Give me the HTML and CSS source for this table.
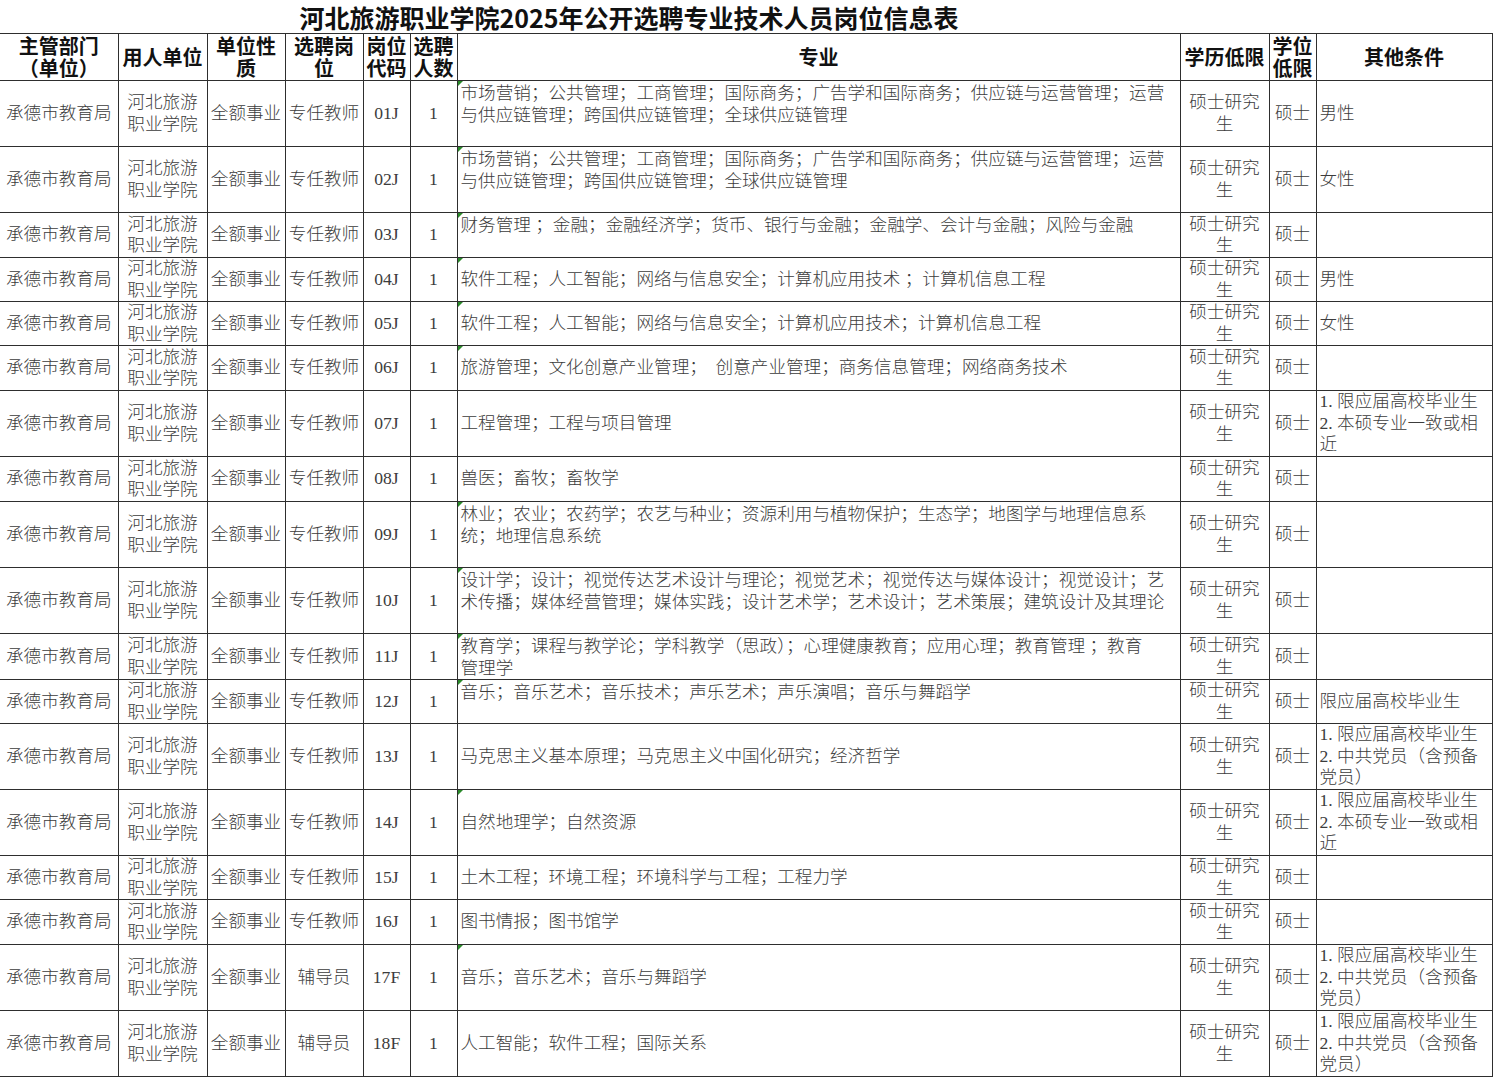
FILE: index.html
```html
<!DOCTYPE html>
<html lang="zh-CN">
<head>
<meta charset="utf-8">
<title>河北旅游职业学院2025年公开选聘专业技术人员岗位信息表</title>
<link rel="stylesheet" href="styles.css">
</head>
<body>
<div class="sheet">
  <div class="title"><span class="title-text">河北旅游职业学院2025年公开选聘专业技术人员岗位信息表</span></div>
  <table class="grid">
    <colgroup>
      <col class="c1"><col class="c2"><col class="c3"><col class="c4"><col class="c5">
      <col class="c6"><col class="c7"><col class="c8"><col class="c9"><col class="c10">
    </colgroup>
    <thead>
      <tr class="head">
        <th>主管部门（单位）</th><th>用人单位</th><th>单位性质</th><th>选聘岗位</th><th>岗位代码</th>
        <th>选聘人数</th><th>专业</th><th>学历低限</th><th>学位低限</th><th>其他条件</th>
      </tr>
    </thead>
    <tbody>
      <tr class="tall">
        <td class="ctr">承德市教育局</td><td class="ctr">河北旅游职业学院</td><td class="ctr">全额事业</td><td class="ctr">专任教师</td><td class="ctr">01J</td><td class="ctr">1</td>
        <td class="major top tri">市场营销；公共管理；工商管理；国际商务；广告学和国际商务；供应链与运营管理；运营<br>与供应链管理；跨国供应链管理；全球供应链管理</td>
        <td class="ctr">硕士研究生</td><td class="ctr">硕士</td><td class="other">男性</td>
      </tr>
      <tr class="tall">
        <td class="ctr">承德市教育局</td><td class="ctr">河北旅游职业学院</td><td class="ctr">全额事业</td><td class="ctr">专任教师</td><td class="ctr">02J</td><td class="ctr">1</td>
        <td class="major top tri">市场营销；公共管理；工商管理；国际商务；广告学和国际商务；供应链与运营管理；运营<br>与供应链管理；跨国供应链管理；全球供应链管理</td>
        <td class="ctr">硕士研究生</td><td class="ctr">硕士</td><td class="other">女性</td>
      </tr>
      <tr class="short plus">
        <td class="ctr">承德市教育局</td><td class="ctr">河北旅游职业学院</td><td class="ctr">全额事业</td><td class="ctr">专任教师</td><td class="ctr">03J</td><td class="ctr">1</td>
        <td class="major top tri">财务管理 ；金融；金融经济学；货币、银行与金融；金融学、会计与金融；风险与金融</td>
        <td class="ctr">硕士研究生</td><td class="ctr">硕士</td><td class="other"></td>
      </tr>
      <tr class="short">
        <td class="ctr">承德市教育局</td><td class="ctr">河北旅游职业学院</td><td class="ctr">全额事业</td><td class="ctr">专任教师</td><td class="ctr">04J</td><td class="ctr">1</td>
        <td class="major tri">软件工程；人工智能；网络与信息安全；计算机应用技术 ；计算机信息工程</td>
        <td class="ctr">硕士研究生</td><td class="ctr">硕士</td><td class="other">男性</td>
      </tr>
      <tr class="short">
        <td class="ctr">承德市教育局</td><td class="ctr">河北旅游职业学院</td><td class="ctr">全额事业</td><td class="ctr">专任教师</td><td class="ctr">05J</td><td class="ctr">1</td>
        <td class="major tri">软件工程；人工智能；网络与信息安全；计算机应用技术；计算机信息工程</td>
        <td class="ctr">硕士研究生</td><td class="ctr">硕士</td><td class="other">女性</td>
      </tr>
      <tr class="short plus">
        <td class="ctr">承德市教育局</td><td class="ctr">河北旅游职业学院</td><td class="ctr">全额事业</td><td class="ctr">专任教师</td><td class="ctr">06J</td><td class="ctr">1</td>
        <td class="major tri">旅游管理；文化创意产业管理；　创意产业管理；商务信息管理；网络商务技术</td>
        <td class="ctr">硕士研究生</td><td class="ctr">硕士</td><td class="other"></td>
      </tr>
      <tr class="tall">
        <td class="ctr">承德市教育局</td><td class="ctr">河北旅游职业学院</td><td class="ctr">全额事业</td><td class="ctr">专任教师</td><td class="ctr">07J</td><td class="ctr">1</td>
        <td class="major">工程管理；工程与项目管理</td>
        <td class="ctr">硕士研究生</td><td class="ctr">硕士</td><td class="other">1. 限应届高校毕业生<br>2. 本硕专业一致或相近</td>
      </tr>
      <tr class="short plus">
        <td class="ctr">承德市教育局</td><td class="ctr">河北旅游职业学院</td><td class="ctr">全额事业</td><td class="ctr">专任教师</td><td class="ctr">08J</td><td class="ctr">1</td>
        <td class="major">兽医；畜牧；畜牧学</td>
        <td class="ctr">硕士研究生</td><td class="ctr">硕士</td><td class="other"></td>
      </tr>
      <tr class="tall">
        <td class="ctr">承德市教育局</td><td class="ctr">河北旅游职业学院</td><td class="ctr">全额事业</td><td class="ctr">专任教师</td><td class="ctr">09J</td><td class="ctr">1</td>
        <td class="major top tri">林业；农业；农药学；农艺与种业；资源利用与植物保护；生态学；地图学与地理信息系<br>统；地理信息系统</td>
        <td class="ctr">硕士研究生</td><td class="ctr">硕士</td><td class="other"></td>
      </tr>
      <tr class="tall">
        <td class="ctr">承德市教育局</td><td class="ctr">河北旅游职业学院</td><td class="ctr">全额事业</td><td class="ctr">专任教师</td><td class="ctr">10J</td><td class="ctr">1</td>
        <td class="major top tri">设计学；设计；视觉传达艺术设计与理论；视觉艺术；视觉传达与媒体设计；视觉设计；艺<br>术传播；媒体经营管理；媒体实践；设计艺术学；艺术设计；艺术策展；建筑设计及其理论</td>
        <td class="ctr">硕士研究生</td><td class="ctr">硕士</td><td class="other"></td>
      </tr>
      <tr class="short plus">
        <td class="ctr">承德市教育局</td><td class="ctr">河北旅游职业学院</td><td class="ctr">全额事业</td><td class="ctr">专任教师</td><td class="ctr">11J</td><td class="ctr">1</td>
        <td class="major top tri">教育学；课程与教学论；学科教学（思政）；心理健康教育；应用心理；教育管理 ；教育<br>管理学</td>
        <td class="ctr">硕士研究生</td><td class="ctr">硕士</td><td class="other"></td>
      </tr>
      <tr class="short">
        <td class="ctr">承德市教育局</td><td class="ctr">河北旅游职业学院</td><td class="ctr">全额事业</td><td class="ctr">专任教师</td><td class="ctr">12J</td><td class="ctr">1</td>
        <td class="major top tri">音乐；音乐艺术；音乐技术；声乐艺术；声乐演唱；音乐与舞蹈学</td>
        <td class="ctr">硕士研究生</td><td class="ctr">硕士</td><td class="other">限应届高校毕业生</td>
      </tr>
      <tr class="tall">
        <td class="ctr">承德市教育局</td><td class="ctr">河北旅游职业学院</td><td class="ctr">全额事业</td><td class="ctr">专任教师</td><td class="ctr">13J</td><td class="ctr">1</td>
        <td class="major">马克思主义基本原理；马克思主义中国化研究；经济哲学</td>
        <td class="ctr">硕士研究生</td><td class="ctr">硕士</td><td class="other">1. 限应届高校毕业生<br>2. 中共党员（含预备党员）</td>
      </tr>
      <tr class="tall">
        <td class="ctr">承德市教育局</td><td class="ctr">河北旅游职业学院</td><td class="ctr">全额事业</td><td class="ctr">专任教师</td><td class="ctr">14J</td><td class="ctr">1</td>
        <td class="major tri">自然地理学；自然资源</td>
        <td class="ctr">硕士研究生</td><td class="ctr">硕士</td><td class="other">1. 限应届高校毕业生<br>2. 本硕专业一致或相近</td>
      </tr>
      <tr class="short">
        <td class="ctr">承德市教育局</td><td class="ctr">河北旅游职业学院</td><td class="ctr">全额事业</td><td class="ctr">专任教师</td><td class="ctr">15J</td><td class="ctr">1</td>
        <td class="major">土木工程；环境工程；环境科学与工程；工程力学</td>
        <td class="ctr">硕士研究生</td><td class="ctr">硕士</td><td class="other"></td>
      </tr>
      <tr class="short plus">
        <td class="ctr">承德市教育局</td><td class="ctr">河北旅游职业学院</td><td class="ctr">全额事业</td><td class="ctr">专任教师</td><td class="ctr">16J</td><td class="ctr">1</td>
        <td class="major">图书情报；图书馆学</td>
        <td class="ctr">硕士研究生</td><td class="ctr">硕士</td><td class="other"></td>
      </tr>
      <tr class="tall">
        <td class="ctr">承德市教育局</td><td class="ctr">河北旅游职业学院</td><td class="ctr">全额事业</td><td class="ctr">辅导员</td><td class="ctr">17F</td><td class="ctr">1</td>
        <td class="major tri">音乐；音乐艺术；音乐与舞蹈学</td>
        <td class="ctr">硕士研究生</td><td class="ctr">硕士</td><td class="other">1. 限应届高校毕业生<br>2. 中共党员（含预备党员）</td>
      </tr>
      <tr class="tall">
        <td class="ctr">承德市教育局</td><td class="ctr">河北旅游职业学院</td><td class="ctr">全额事业</td><td class="ctr">辅导员</td><td class="ctr">18F</td><td class="ctr">1</td>
        <td class="major">人工智能；软件工程；国际关系</td>
        <td class="ctr">硕士研究生</td><td class="ctr">硕士</td><td class="other">1. 限应届高校毕业生<br>2. 中共党员（含预备党员）</td>
      </tr>
    </tbody>
  </table>
</div>
</body>
</html>
```
FILE: styles.css
```css
html, body {
  margin: 0;
  padding: 0;
  background: #ffffff;
}

.sheet {
  width: 1496px;
}

.title {
  width: 1258px;
  height: 33px;
  display: flex;
  align-items: center;
  justify-content: center;
}

.title-text {
  font-family: "Noto Sans CJK SC", sans-serif;
  font-weight: 700;
  font-size: 25px;
  line-height: 1.2;
  color: #111;
}

.grid {
  border-collapse: collapse;
  table-layout: fixed;
  width: 1492px;
}

.c1 { width: 118px; }
.c2 { width: 89px; }
.c3 { width: 78px; }
.c4 { width: 78px; }
.c5 { width: 47px; }
.c6 { width: 47px; }
.c7 { width: 723px; }
.c8 { width: 89px; }
.c9 { width: 47px; }
.c10 { width: 176px; }

.grid th,
.grid td {
  border: 1px solid #2e2e2e;
  padding: 0 3px;
}

.grid tr > :first-child {
  border-left: none;
}

.head {
  height: 47px;
}

.grid th {
  font-family: "Noto Sans CJK SC", sans-serif;
  font-weight: 700;
  font-size: 20px;
  line-height: 22.5px;
  color: #111;
  text-align: center;
  vertical-align: middle;
  padding: 0 2px;
}

.grid td {
  font-family: "Liberation Serif", "Noto Sans CJK SC", serif;
  font-weight: 300;
  font-size: 17.6px;
  line-height: 21.5px;
  color: #3c3c3c;
  vertical-align: middle;
}

.tall { height: 66px; }
.short { height: 44px; }
.short.plus { height: 45px; }

.ctr {
  text-align: center;
}

.major {
  text-align: left;
  position: relative;
}

.grid td.major.top {
  vertical-align: top;
  padding-top: 2px;
}

.other {
  text-align: left;
}

.tri::before {
  content: "";
  position: absolute;
  top: 0;
  left: 0;
  border-top: 5px solid #2a8a2a;
  border-right: 5px solid transparent;
}
```
